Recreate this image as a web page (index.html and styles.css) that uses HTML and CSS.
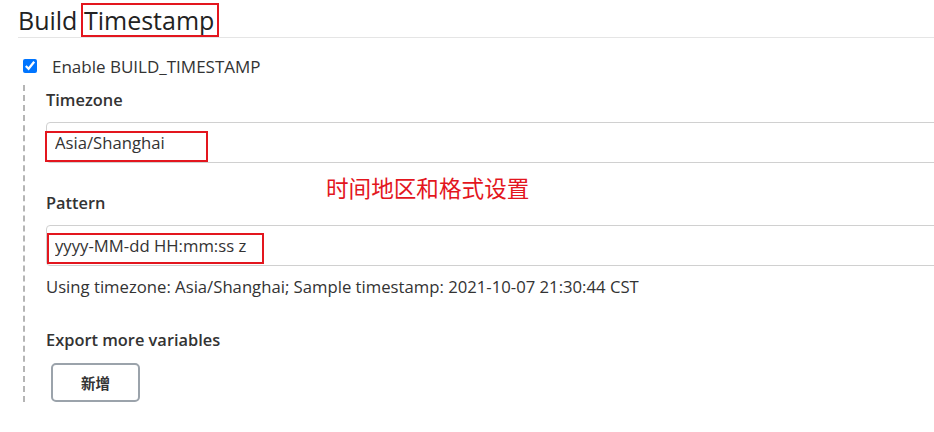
FILE: index.html
```html
<!DOCTYPE html>
<html lang="zh-CN">
<head>
    <meta charset="UTF-8">
    <title>Build Timestamp</title>
    <link rel="stylesheet" href="styles.css">
</head>
<body>
    <div class="page">
        <h2 class="section-title">Build <span class="title-word">Timestamp</span></h2>

        <label class="enable-row">
            <input type="checkbox" checked>
            <span>Enable BUILD_TIMESTAMP</span>
        </label>

        <div class="nested">
            <div class="field">
                <div class="field-label">Timezone</div>
                <div class="input-wrap">
                    <input class="text-input" type="text" value="Asia/Shanghai">
                    <span class="mark mark-tz"></span>
                    <span class="note">时间地区和格式设置</span>
                </div>
            </div>

            <div class="field">
                <div class="field-label">Pattern</div>
                <div class="input-wrap">
                    <input class="text-input" type="text" value="yyyy-MM-dd HH:mm:ss z">
                    <span class="mark mark-pattern"></span>
                </div>
                <div class="field-help">Using timezone: Asia/Shanghai; Sample timestamp: 2021-10-07 21:30:44 CST</div>
            </div>

            <div class="field field-export">
                <div class="field-label">Export more variables</div>
                <button class="btn-add" type="button">新增</button>
            </div>
        </div>
    </div>
</body>
</html>
```

FILE: styles.css
```css
html, body {
    margin: 0;
    background-color: #fff;
    overflow: hidden;
}
body {
    font-family: "Open Sans", "Noto Sans CJK SC", sans-serif;
    color: #333;
    font-size: 16.7px;
}
.page {
    padding: 0 0 0 18px;
    width: 916px;
}
.section-title {
    margin: 0;
    padding-top: 3px;
    font-size: 25px;
    font-weight: 400;
    line-height: 34px;
    border-bottom: 1px solid #e5e5e5;
    color: #222;
}
.title-word {
    position: relative;
}
.title-word::after {
    content: "";
    position: absolute;
    left: -3px;
    right: -5px;
    top: 0;
    bottom: 0;
    border: 2px solid #e3161e;
}
.enable-row {
    display: flex;
    align-items: center;
    margin-top: 18px;
    height: 20px;
    font-size: 17px;
}
.enable-row input {
    width: 14px;
    height: 14px;
    margin: 0 15px 0 5px;
    accent-color: #0075ff;
}
.nested {
    margin-left: 5px;
    margin-top: 9px;
    padding: 4px 0 0 21px;
    border-left: 2px dashed #b5b5b5;
}
.field-label {
    font-weight: 600;
    font-size: 16.4px;
    line-height: 22px;
}
.field + .field {
    margin-top: 29px;
}
.field + .field-export {
    margin-top: 31px;
}
.input-wrap {
    position: relative;
    margin-top: 11px;
}
.text-input {
    display: block;
    box-sizing: border-box;
    width: 1000px;
    height: 41px;
    padding: 0 8px;
    font-family: inherit;
    font-size: 16.7px;
    color: #333;
    border: 1px solid #d0d0d0;
    border-radius: 4px 0 0 4px;
    background: #fff;
    outline: none;
}
.mark {
    position: absolute;
    border: 2px solid #e3161e;
    pointer-events: none;
}
.mark-tz {
    left: -1px;
    top: 9px;
    width: 159px;
    height: 27px;
}
.mark-pattern {
    left: 1px;
    top: 8px;
    width: 213px;
    height: 27px;
}
.note {
    position: absolute;
    left: 280px;
    top: 51px;
    font-size: 22.6px;
    line-height: 30px;
    color: #e3161e;
    font-family: "Noto Sans CJK SC", sans-serif;
}
.field-help {
    margin-top: 10px;
    line-height: 22px;
    color: #333;
}
.btn-add {
    display: block;
    margin: 12px 0 0 5px;
    width: 89px;
    height: 39px;
    border: 2px solid #9ba3ab;
    border-radius: 5px;
    background: #fff;
    font-family: "Noto Sans CJK SC", sans-serif;
    font-weight: 700;
    font-size: 14.5px;
    color: #333;
    cursor: pointer;
}
```
